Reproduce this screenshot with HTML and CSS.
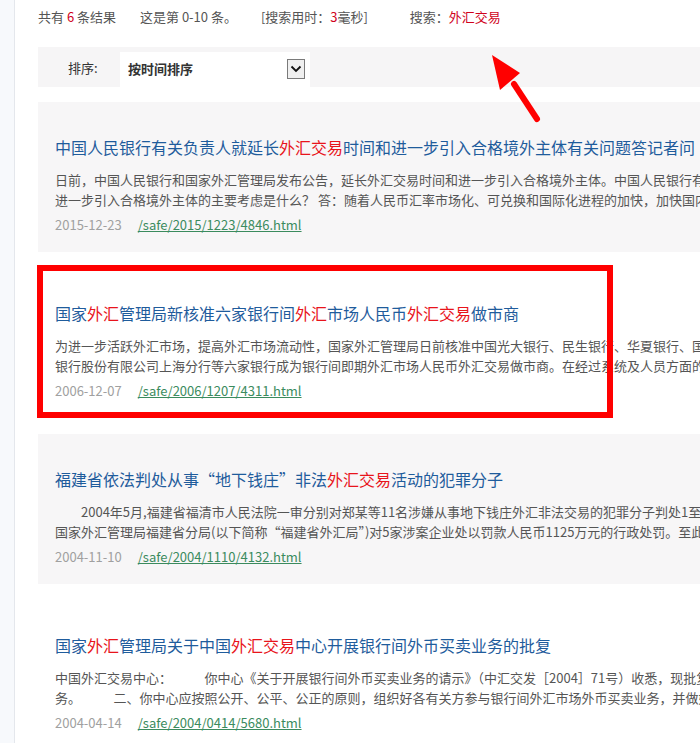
FILE: index.html
```html
<!DOCTYPE html>
<html>
<head>
  <meta charset="utf-8">
  <title>搜索结果 - 外汇交易</title>
  <link rel="stylesheet" href="styles.css">
</head>
<body>
<div class="page">
  <!-- search summary -->
  <p class="summary">
    <span>共有 <em>6</em> 条结果</span>
    <span class="gap1">这是第 0-10 条。</span>
    <span class="gap2">[搜索用时：<em>3</em>毫秒]</span>
    <span class="gap3">搜索：<em>外汇交易</em></span>
  </p>

  <!-- sort bar -->
  <div class="sortbar">
    <span class="sort-label">排序:</span>
    <div class="select">
      <span>按时间排序</span>
      <span class="select-btn">
        <svg viewBox="0 0 12 8" width="12" height="8"><path d="M1.5 1.5 L6 6 L10.5 1.5" fill="none" stroke="#111" stroke-width="1.8"/></svg>
      </span>
    </div>
  </div>

  <!-- results -->
  <div class="results">
    <div class="item">
      <h3 class="item-title">中国人民银行有关负责人就延长<em>外汇交易</em>时间和进一步引入合格境外主体有关问题答记者问</h3>
      <p class="item-desc">
        <span>日前，中国人民银行和国家外汇管理局发布公告，延长外汇交易时间和进一步引入合格境外主体。中国人民银行有关负责人就相关问题回答了记者提问。</span>
        <span>进一步引入合格境外主体的主要考虑是什么？ 答：随着人民币汇率市场化、可兑换和国际化进程的加快，加快国内外汇市场对外开放。</span>
      </p>
      <p class="item-meta"><span class="date">2015-12-23</span><a href="#">/safe/2015/1223/4846.html</a></p>
    </div>

    <div class="item white">
      <h3 class="item-title">国家<em>外汇</em>管理局新核准六家银行间<em>外汇</em>市场人民币<em>外汇交易</em>做市商</h3>
      <p class="item-desc">
        <span>为进一步活跃外汇市场，提高外汇市场流动性，国家外汇管理局日前核准中国光大银行、民生银行、华夏银行、国家开发银行、</span>
        <span>银行股份有限公司上海分行等六家银行成为银行间即期外汇市场人民币外汇交易做市商。在经过系统及人员方面的准备后，</span>
      </p>
      <p class="item-meta"><span class="date">2006-12-07</span><a href="#">/safe/2006/1207/4311.html</a></p>
    </div>

    <div class="item">
      <h3 class="item-title">福建省依法判处从事“地下钱庄”非法<em>外汇交易</em>活动的犯罪分子</h3>
      <p class="item-desc">
        <span>　　2004年5月,福建省福清市人民法院一审分别对郑某等11名涉嫌从事地下钱庄外汇非法交易的犯罪分子判处1至4年有期徒刑，</span>
        <span>国家外汇管理局福建省分局(以下简称“福建省外汇局”)对5家涉案企业处以罚款人民币1125万元的行政处罚。至此，</span>
      </p>
      <p class="item-meta"><span class="date">2004-11-10</span><a href="#">/safe/2004/1110/4132.html</a></p>
    </div>

    <div class="item white">
      <h3 class="item-title">国家<em>外汇</em>管理局关于中国<em>外汇交易</em>中心开展银行间外币买卖业务的批复</h3>
      <p class="item-desc">
        <span>中国外汇交易中心：　　　你中心《关于开展银行间外币买卖业务的请示》（中汇交发［2004］71号）收悉，现批复如下：</span>
        <span>务。　　　二、你中心应按照公开、公平、公正的原则，组织好各有关方参与银行间外汇市场外币买卖业务，并做好风险防范。</span>
      </p>
      <p class="item-meta"><span class="date">2004-04-14</span><a href="#">/safe/2004/0414/5680.html</a></p>
    </div>
  </div>
</div>

<!-- annotation drawn over the screenshot -->
<div class="mark-box"></div>
<svg class="mark-arrow" viewBox="0 0 60 80" width="60" height="80">
  <path d="M24 34 L47 69" stroke="#f00" stroke-width="6" stroke-linecap="round" fill="none"/>
  <polygon points="2,5 10,40 30,23" fill="#f00"/>
</svg>
</body>
</html>
```

FILE: styles.css
```css
/* page base */
body {
  margin: 0;
  overflow: hidden;
  background: #f7f9fc;
  font-family: "Noto Sans CJK SC", "Noto Sans", sans-serif;
  font-size: 13px;
  color: #555;
}
em {
  font-style: normal;
}
.page {
  margin-left: 14px;
  min-height: 760px;
  width: 1100px;
  padding-left: 23px;
  border-left: 1px solid #e4e7ec;
  background: #fff;
}

/* summary line */
.summary {
  margin: 0;
  padding-top: 7px;
  line-height: 20px;
  white-space: nowrap;
}
.summary em {
  color: #d0021b;
}
.summary .gap1 { margin-left: 21px; }
.summary .gap2 { margin-left: 21px; }
.summary .gap3 { margin-left: 39px; }

/* sort bar */
.sortbar {
  display: flex;
  align-items: flex-end;
  height: 40px;
  margin-top: 20px;
  background: #f6f5f6;
}
.sort-label {
  width: 52px;
  padding-left: 30px;
  height: 35px;
  line-height: 32px;
  color: #333;
}
.select {
  display: flex;
  align-items: center;
  justify-content: space-between;
  width: 182px;
  height: 33px;
  padding: 0 0 2px 8px;
  background: #fff;
  font-weight: bold;
  color: #333;
}
.select-btn {
  display: flex;
  align-items: center;
  justify-content: center;
  width: 16px;
  height: 18px;
  margin-right: 5px;
  border: 1px solid #7a7a7a;
  background: #f0f0f0;
}

/* result list */
.results {
  margin-top: 15px;
}
.item {
  height: 150px;
  box-sizing: border-box;
  padding: 32px 17px 18px;
  margin-bottom: 16px;
  background: #f7f6f7;
}
.item.white {
  background: #fff;
}
.item-title {
  margin: 0 0 10px;
  font-size: 16px;
  font-weight: normal;
  line-height: 26px;
  color: #1f5c9c;
  white-space: nowrap;
}
.item-title em {
  color: #e8141b;
}
.item-desc {
  margin: 0;
  line-height: 20px;
  color: #555;
}
.item-desc span {
  display: block;
  white-space: nowrap;
}
.item-meta {
  margin: 5px 0 0;
  line-height: 20px;
}
.item-meta .date {
  color: #a0a0a0;
  margin-right: 16px;
}
.item-meta a {
  color: #3b8b5e;
  text-decoration: underline;
}

/* red annotation */
.mark-box {
  position: absolute;
  left: 37px;
  top: 265px;
  width: 564px;
  height: 141px;
  border: 6px solid #f00;
}
.mark-arrow {
  position: absolute;
  left: 490px;
  top: 50px;
}
```
